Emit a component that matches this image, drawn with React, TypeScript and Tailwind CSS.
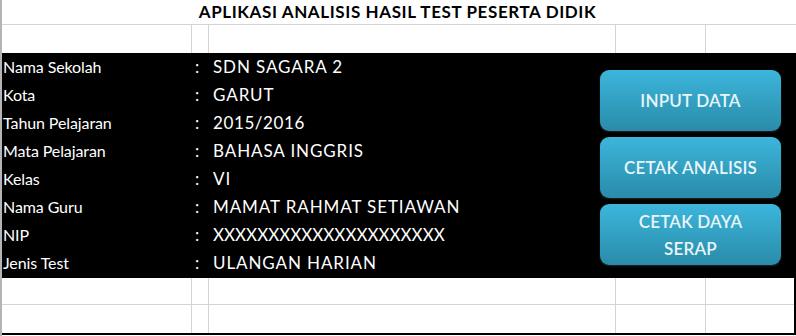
import React from 'react';

const rows = [
  ['Nama Sekolah', 'SDN SAGARA 2', 'tracking-[0.9px]'],
  ['Kota', 'GARUT', 'tracking-[0.9px]'],
  ['Tahun Pelajaran', '2015/2016', 'tracking-[0.6px]'],
  ['Mata Pelajaran', 'BAHASA INGGRIS', 'tracking-[0.9px]'],
  ['Kelas', 'VI', 'tracking-[0.9px]'],
  ['Nama Guru', 'MAMAT RAHMAT SETIAWAN', 'tracking-[0.9px]'],
  ['NIP', 'XXXXXXXXXXXXXXXXXXXXX', 'tracking-[0px]'],
  ['Jenis Test', 'ULANGAN HARIAN', 'tracking-[0.9px]'],
];

const buttons = [['INPUT DATA'], ['CETAK ANALISIS'], ['CETAK DAYA', 'SERAP']];

function GridCells() {
  return (
    <>
      <div className="border-r border-[#d4d4d4]" />
      <div className="border-r border-[#d4d4d4]" />
      <div className="border-r border-[#d4d4d4]" />
      <div className="border-r border-[#d4d4d4]" />
      <div />
    </>
  );
}

export default function App() {
  return (
    <div
      className="w-[796px] h-[336px] bg-white overflow-hidden border-l-2 border-[#b4b4b4]"
      style={{ fontFamily: 'Lato, "Open Sans", sans-serif' }}
    >
      {/* title */}
      <div className="h-[25px] border-b border-[#d4d4d4] flex items-center justify-center">
        <h1 className="text-[17px] font-bold text-black tracking-[0.6px] ml-[-3px]">
          APLIKASI ANALISIS HASIL TEST PESERTA DIDIK
        </h1>
      </div>
      <div className="grid grid-cols-[190px_17px_407px_90px_1fr] h-[28px]">
        <GridCells />
      </div>

      {/* info block */}
      <div className="h-[225px] bg-black flex">
        <div className="w-[598px] flex flex-col">
          {rows.map(([label, value, track]) => (
            <div key={label} className="h-[28px] flex items-center text-white">
              <span className="w-[193px] pl-[1px] text-[16px] tracking-[-0.1px]">{label}</span>
              <span className="w-[18px] text-[17px]">:</span>
              <span className={`text-[17px] ${track}`}>{value}</span>
            </div>
          ))}
        </div>
        <div className="flex flex-col gap-[6px] pt-[17px]">
          {buttons.map((lines) => (
            <button
              key={lines.join(' ')}
              className="w-[181px] h-[61px] rounded-[9px] bg-gradient-to-b from-[#3cb6dc] to-[#2a8ba9] text-[#e8f5f9] text-[17px] font-semibold tracking-[0.2px] leading-[27px] flex flex-col items-center justify-center shadow-[0_1px_2px_rgba(255,255,255,0.15)]"
            >
              {lines.map((l) => (
                <span key={l}>{l}</span>
              ))}
            </button>
          ))}
        </div>
      </div>

      {/* bottom rows */}
      <div className="border-r-2 border-b-2 border-black">
        <div className="grid grid-cols-[190px_17px_407px_90px_1fr] h-[27px] border-b border-[#d4d4d4]">
          <GridCells />
        </div>
        <div className="grid grid-cols-[190px_17px_407px_90px_1fr] h-[28px]">
          <GridCells />
        </div>
      </div>
    </div>
  );
}
